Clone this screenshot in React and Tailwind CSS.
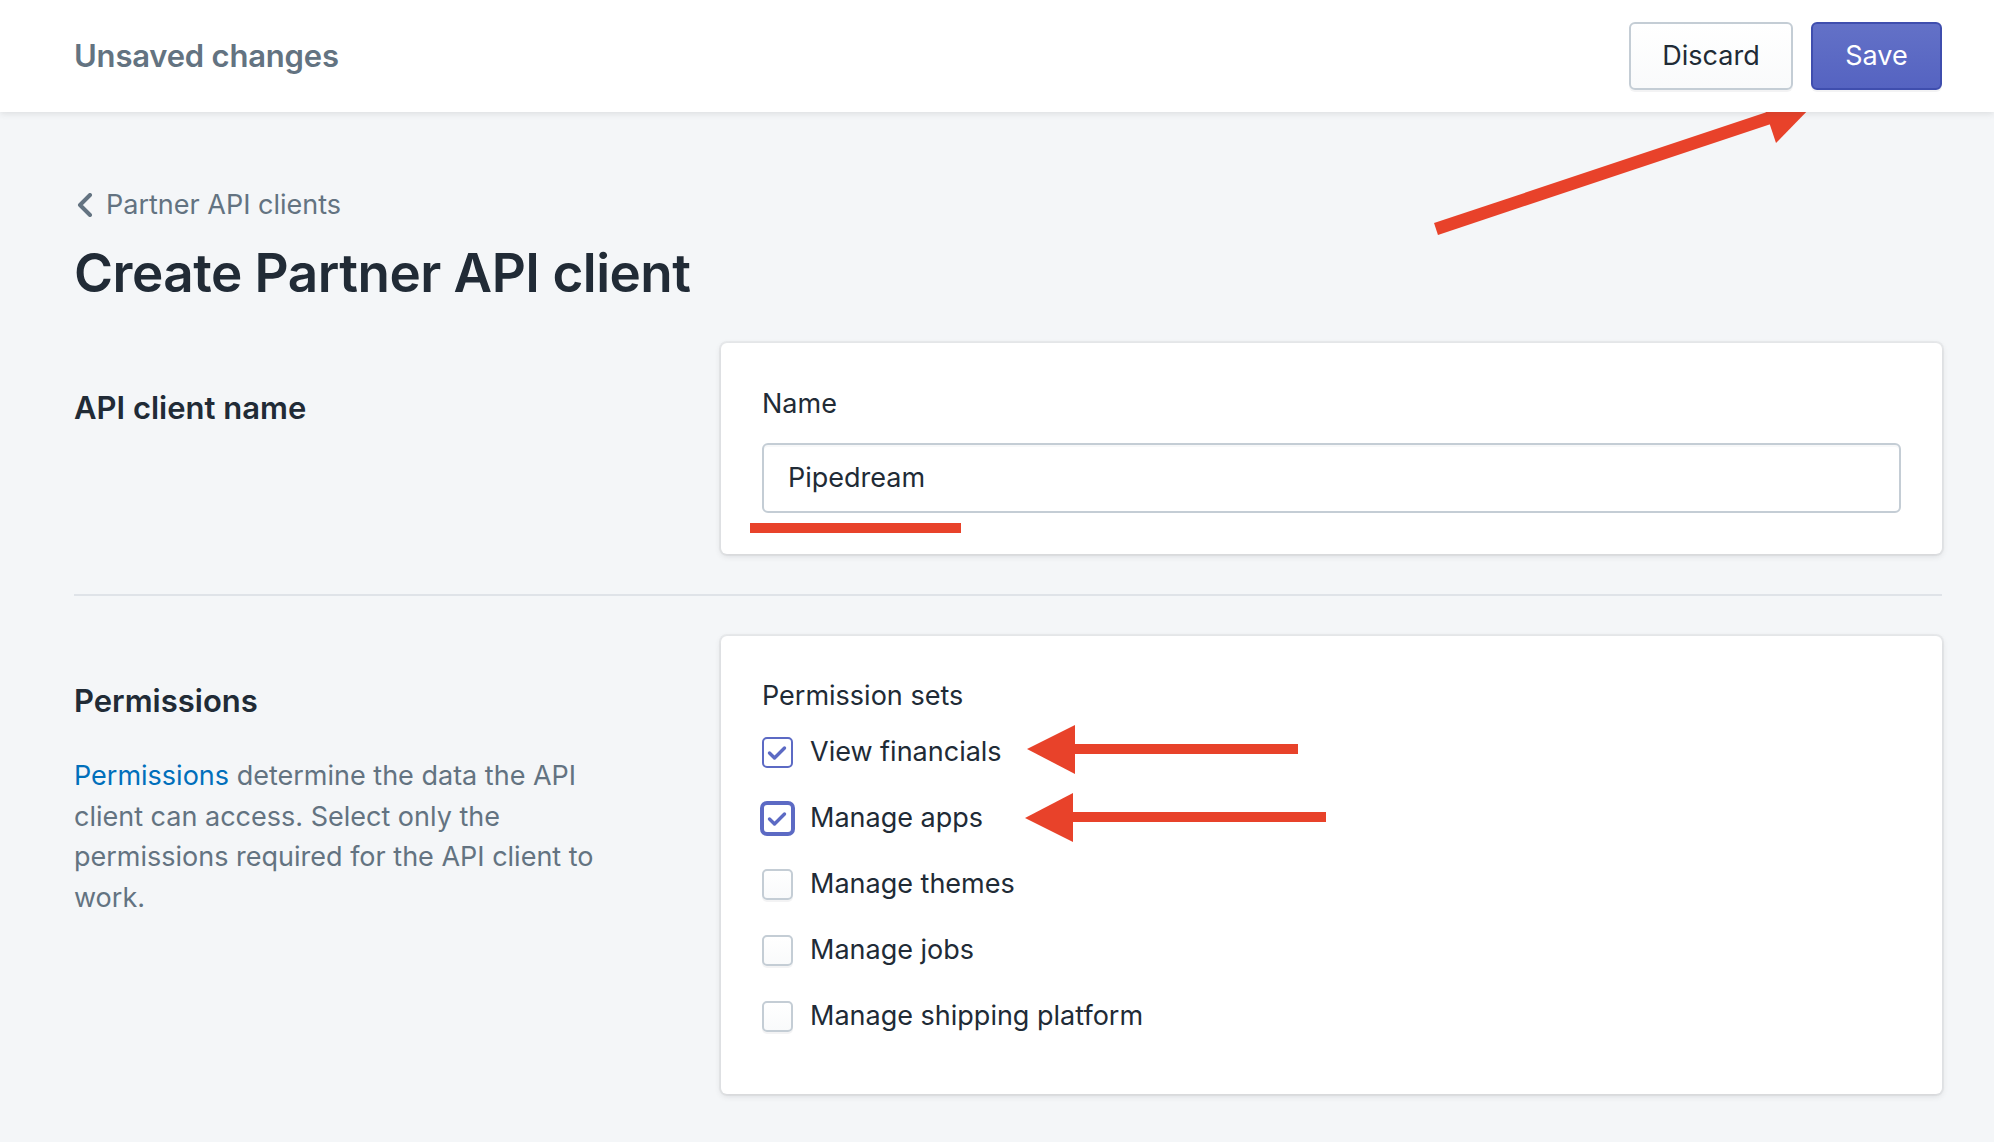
const permissions = [
  { label: "View financials", checked: true },
  { label: "Manage apps", checked: true, focused: true },
  { label: "Manage themes", checked: false },
  { label: "Manage jobs", checked: false },
  { label: "Manage shipping platform", checked: false },
];

function Checkbox({ checked, focused }) {
  if (!checked) {
    return (
      <span className="size-[31px] shrink-0 rounded-[5px] border-2 border-[#c4cdd5] bg-gradient-to-b from-white to-[#f9fafb] shadow-[0_2px_0_rgba(22,29,37,0.05)]" />
    );
  }
  return (
    <span
      className={
        focused
          ? "size-[31px] shrink-0 rounded-[5px] border-2 border-[#5c6ac4] bg-white shadow-[0_0_0_2px_#5c6ac4]"
          : "size-[31px] shrink-0 rounded-[5px] border-2 border-[#5c6ac4] bg-white"
      }
    >
      <svg viewBox="0 0 27 27" className="block size-[27px]" fill="none">
        <path d="M5.5 14 L10.5 19 L20.5 9" stroke="#5c6ac4" strokeWidth="3.4" strokeLinecap="round" strokeLinejoin="round" />
      </svg>
    </span>
  );
}

function Overlay() {
  const red = "#e8422a";
  return (
    <svg className="pointer-events-none absolute left-0 top-0" width="1994" height="1142" viewBox="0 0 1994 1142">
      <line x1="1436" y1="229" x2="1772" y2="117" stroke={red} strokeWidth="12.5" />
      <polygon points="1815,103 1760,95 1776,143" fill={red} />
      <rect x="1068" y="744" width="230" height="10" fill={red} />
      <polygon points="1027,749 1075,725 1075,774" fill={red} />
      <rect x="1068" y="812" width="258" height="10" fill={red} />
      <polygon points="1025,818 1073,793 1073,842" fill={red} />
      <rect x="750" y="523" width="211" height="10" fill={red} />
    </svg>
  );
}

export default function App() {
  return (
    <div className="relative min-h-screen bg-[#f4f6f8] font-['Inter',sans-serif] text-[#212b36]">
      <header className="relative z-10 flex h-[112px] items-center justify-between bg-white pl-[74px] pr-[52px] shadow-[0_2px_6px_rgba(63,63,68,0.12)]">
        <div className="text-[31px] font-semibold tracking-[-0.2px] text-[#637381]">Unsaved changes</div>
        <div className="flex items-center gap-[18px]">
          <button className="h-[68px] w-[164px] rounded-[6px] border-2 border-[#c4cdd5] bg-gradient-to-b from-white to-[#f9fafb] text-[27px] text-[#212b36] shadow-[0_2px_0_rgba(22,29,37,0.05)]">
            Discard
          </button>
          <button className="h-[68px] w-[131px] rounded-[6px] border-2 border-[#3f4eae] bg-gradient-to-b from-[#6371c7] to-[#5563c1] text-[27px] text-white shadow-[0_2px_0_rgba(22,29,37,0.05)]">
            Save
          </button>
        </div>
      </header>

      <main className="pl-[74px] pr-[52px] pt-[73px] pb-[48px]">
        <div className="flex h-[40px] items-center gap-[12px] text-[27px] text-[#637381]">
          <svg viewBox="0 0 18 24" className="ml-[2px] h-[24px] w-[18px]" fill="none">
            <path d="M14 2 L4 12 L14 22" stroke="#637381" strokeWidth="4" strokeLinecap="round" strokeLinejoin="round" />
          </svg>
          <span>Partner API clients</span>
        </div>
        <h1 className="mt-[16px] text-[53px] font-semibold leading-[64px] tracking-[-0.5px]">Create Partner API client</h1>

        <section className="mt-[38px] grid grid-cols-[647px_1fr] pb-[40px]">
          <div className="pt-[41px] pr-[32px]">
            <h2 className="text-[31px] font-semibold leading-[48px]">API client name</h2>
          </div>
          <div className="rounded-[6px] bg-white px-[41px] pt-[41px] pb-[41px] shadow-[0_0_0_2px_rgba(63,63,68,0.05),0_2px_6px_rgba(63,63,68,0.15)]">
            <div className="text-[27px] leading-[40px]">Name</div>
            <div className="mt-[19px] flex h-[70px] items-center rounded-[6px] border-2 border-[#c4cdd5] bg-white px-[24px] text-[27px] shadow-[inset_0_2px_0_rgba(99,115,129,0.05)]">
              Pipedream
            </div>
          </div>
        </section>

        <section className="grid grid-cols-[647px_1fr] border-t-2 border-[#dfe3e8] pt-[40px]">
          <div className="pt-[41px] pr-[32px]">
            <h2 className="text-[31px] font-semibold leading-[48px]">Permissions</h2>
            <p className="mt-[31px] max-w-[555px] text-[27px] leading-[40.5px] text-[#637381]">
              <a className="text-[#006fbb]">Permissions</a> determine the data the API client can access. Select only the
              permissions required for the API client to work.
            </p>
          </div>
          <div className="rounded-[6px] bg-white px-[41px] pt-[40px] pb-[58px] shadow-[0_0_0_2px_rgba(63,63,68,0.05),0_2px_6px_rgba(63,63,68,0.15)]">
            <div className="text-[27px] leading-[40px]">Permission sets</div>
            <ul className="mt-[16px] flex flex-col gap-[26px]">
              {permissions.map((p) => (
                <li key={p.label} className="flex h-[40px] items-center gap-[17px] text-[27px]">
                  <Checkbox checked={p.checked} focused={p.focused} />
                  <span>{p.label}</span>
                </li>
              ))}
            </ul>
          </div>
        </section>
      </main>

      <Overlay />
    </div>
  );
}
